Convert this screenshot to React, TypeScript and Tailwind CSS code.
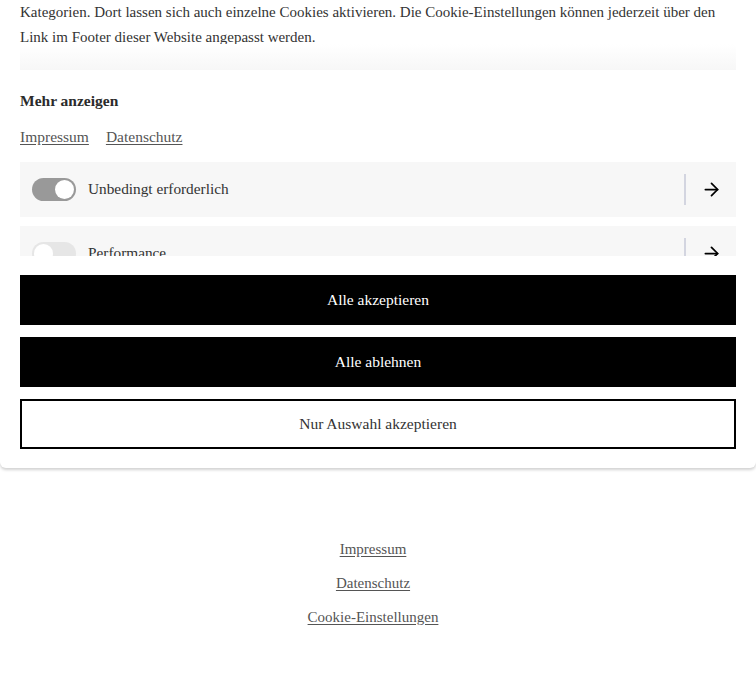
import React from 'react'
import { ArrowRight } from 'lucide-react'

const serif = { fontFamily: '"Liberation Serif", "Times New Roman", serif' }

const CategoryRow = ({ label, enabled }: { label: string; enabled: boolean }) => {
  return (
    <div className="flex items-center h-[55px] shrink-0 bg-[#f7f7f7] pl-3">
      <span
        className={
          enabled
            ? 'flex items-center justify-end w-[44px] h-[23px] rounded-full bg-[#999999] px-[2px]'
            : 'flex items-center justify-start w-[44px] h-[23px] rounded-full bg-[#e6e6e6] px-[2px]'
        }
      >
        <span className="block w-[19px] h-[19px] rounded-full bg-white" />
      </span>
      <span className="ml-3 grow text-[15.3px] text-[#333333]">{label}</span>
      <span className="w-[2px] h-[31px] bg-[#d3d5e0]" />
      <span className="flex items-center justify-center w-[50px]">
        <ArrowRight className="h-[21px] w-[21px] text-black" strokeWidth={2} />
      </span>
    </div>
  )
}

const App = () => {
  return (
    <div className="min-h-[695px] w-full bg-white text-[#333333]" style={serif}>
      {/* banner */}
      <div className="w-full bg-white rounded-b-[6px] shadow-[0_2px_3px_rgba(0,0,0,0.18)]">
        <div className="h-[256px] overflow-hidden px-5 flex flex-col">
          <p className="h-[44px] shrink-0 text-[15px] leading-[25px] whitespace-nowrap">
            Kategorien. Dort lassen sich auch einzelne Cookies aktivieren. Die Cookie-Einstellungen können jederzeit über den
            <br />
            Link im Footer dieser Website angepasst werden.
          </p>
          <div className="h-[26px] shrink-0 bg-gradient-to-b from-white to-[#f7f7f7]" />
          <h3 className="mt-[19px] text-[15.5px] font-bold leading-[24px] text-[#2b2b2b]">Mehr anzeigen</h3>
          <div className="mt-[12px] flex gap-[17px] text-[15.5px] leading-[24px] text-[#555555]">
            <a className="underline underline-offset-2">Impressum</a>
            <a className="underline underline-offset-2">Datenschutz</a>
          </div>
          <div className="mt-[13px] flex flex-col gap-[9px]">
            <CategoryRow label="Unbedingt erforderlich" enabled={true} />
            <CategoryRow label="Performance" enabled={false} />
          </div>
        </div>
        <div className="flex flex-col gap-3 px-5 pt-[19px] pb-[19px] text-[15.5px]">
          <button className="h-[50px] bg-black text-white">Alle akzeptieren</button>
          <button className="h-[50px] bg-black text-white">Alle ablehnen</button>
          <button className="h-[50px] border-2 border-black bg-white text-[#333333]">Nur Auswahl akzeptieren</button>
        </div>
      </div>

      {/* footer links */}
      <div className="flex flex-col items-center gap-[10px] pt-[69px] pr-[10px] text-[15px] leading-[24px] text-[#555555]">
        <a className="underline underline-offset-2">Impressum</a>
        <a className="underline underline-offset-2">Datenschutz</a>
        <a className="underline underline-offset-2">Cookie-Einstellungen</a>
      </div>
    </div>
  )
}

export default App
